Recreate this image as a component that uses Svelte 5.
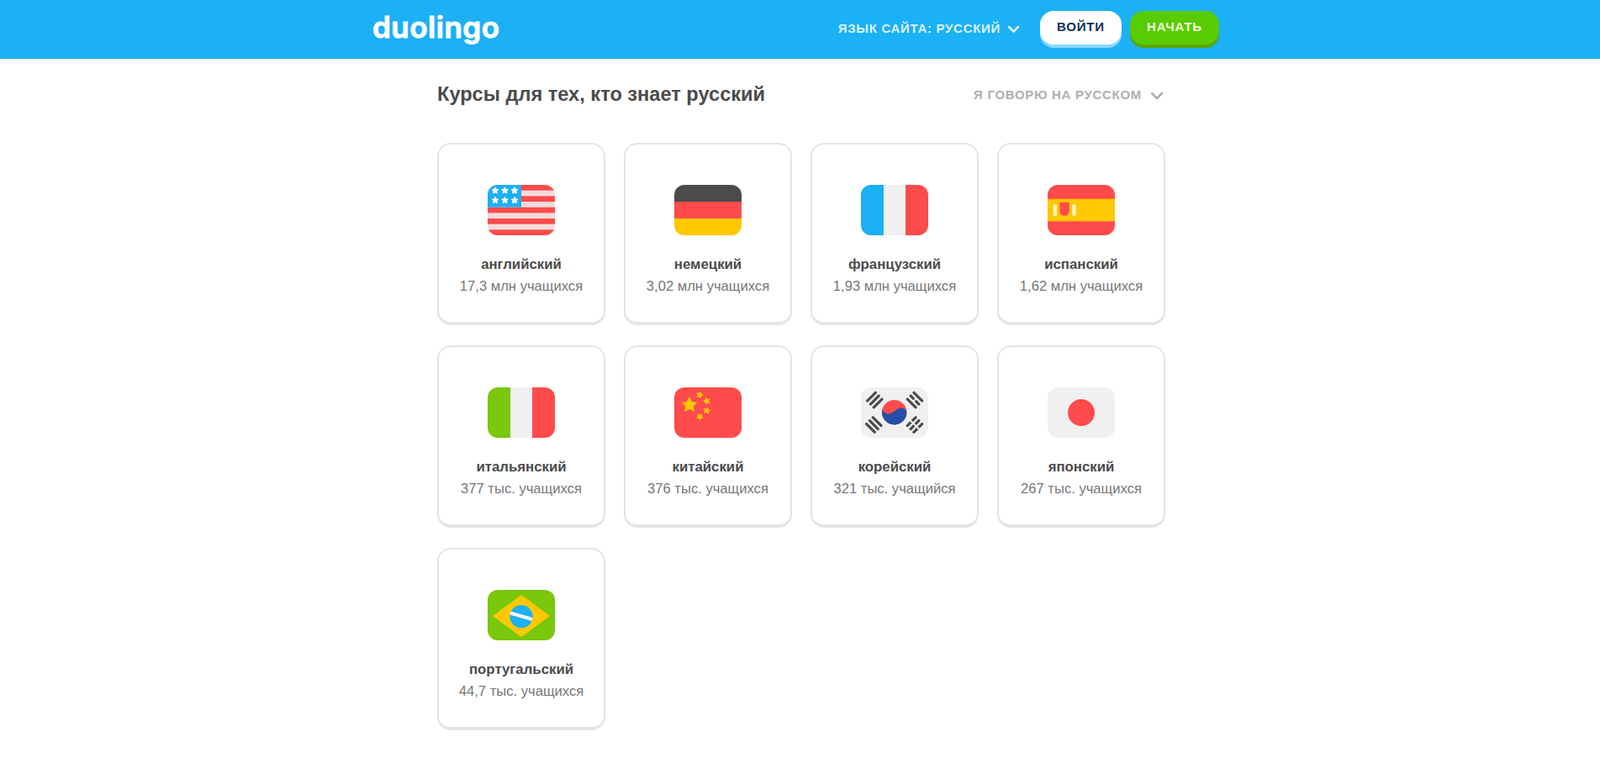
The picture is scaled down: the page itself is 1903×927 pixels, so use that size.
<script lang="ts">
  const courses = [
    { code: 'us', name: 'английский', learners: '17,3 млн учащихся' },
    { code: 'de', name: 'немецкий', learners: '3,02 млн учащихся' },
    { code: 'fr', name: 'французский', learners: '1,93 млн учащихся' },
    { code: 'es', name: 'испанский', learners: '1,62 млн учащихся' },
    { code: 'it', name: 'итальянский', learners: '377 тыс. учащихся' },
    { code: 'cn', name: 'китайский', learners: '376 тыс. учащихся' },
    { code: 'kr', name: 'корейский', learners: '321 тыс. учащийся' },
    { code: 'jp', name: 'японский', learners: '267 тыс. учащихся' },
    { code: 'br', name: 'португальский', learners: '44,7 тыс. учащихся' }
  ];

  const usStars = [
    [9, 6.8], [20.5, 6.8], [32, 6.8],
    [9, 18.4], [20.5, 18.4], [32, 18.4]
  ];
  const cnStars = [
    [30.3, 9, 0.3], [38.7, 16.3, 0.9], [38.7, 27.7, 0.2], [30.3, 35, 0.7]
  ];
  const usStripes = [0, 13.33, 26.67, 40, 53.33];
  const krBars = [-5.4, 0, 5.4];

  // five pointed star, rot in radians
  function star(cx: number, cy: number, r: number, rot = 0) {
    const pts = [];
    for (let i = 0; i < 10; i++) {
      const rad = i % 2 ? r * 0.5 : r;
      const a = -Math.PI / 2 + rot + (i * Math.PI) / 5;
      pts.push(`${(cx + rad * Math.cos(a)).toFixed(2)},${(cy + rad * Math.sin(a)).toFixed(2)}`);
    }
    return pts.join(' ');
  }
</script>

<header class="top-bar">
  <div class="top-inner">
    <span class="logo">duolingo</span>
    <div class="top-actions">
      <button class="site-lang" type="button">
        <span>Язык сайта: русский</span>
        <svg class="chevron" width="15" height="10" viewBox="0 0 15 10" aria-hidden="true">
          <path d="M2 2l5.500 5.500L13 2" />
        </svg>
      </button>
      <button class="btn btn-login" type="button">Войти</button>
      <button class="btn btn-start" type="button">Начать</button>
    </div>
  </div>
</header>

<main class="courses">
  <div class="courses-head">
    <h1 class="title">Курсы для тех, кто знает русский</h1>
    <button class="speak-lang" type="button">
      <span>Я говорю на русском</span>
      <svg class="chevron" width="16" height="10" viewBox="0 0 16 10" aria-hidden="true">
        <path d="M2 2l6 6 6-6" />
      </svg>
    </button>
  </div>

  <ul class="course-grid">
    {#each courses as course (course.code)}
      <li class="course-card">
        <svg class="flag" width="80" height="60" viewBox="0 0 80 60" role="img" aria-label={course.name}>
          <defs>
            <clipPath id="clip-{course.code}">
              <rect width="80" height="60" rx="12" />
            </clipPath>
          </defs>
          <g clip-path="url(#clip-{course.code})">
            {#if course.code === 'us'}
              <rect width="80" height="60" fill="#f3dcdc" />
              {#each usStripes as y (y)}
                <rect {y} width="80" height="6.67" fill="#ff4b4b" />
              {/each}
              <rect width="40" height="26.67" fill="#1cb0f6" />
              {#each usStars as s (s[0] + '-' + s[1])}
                <polygon class="soft" points={star(s[0], s[1], 4)} fill="#fff" stroke="#fff" />
              {/each}
            {:else if course.code === 'de'}
              <rect width="80" height="20" fill="#4b4b4b" />
              <rect y="20" width="80" height="20" fill="#ff4b4b" />
              <rect y="40" width="80" height="20" fill="#ffc800" />
            {:else if course.code === 'fr'}
              <rect width="27" height="60" fill="#1cb0f6" />
              <rect x="27" width="26" height="60" fill="#f0f0f0" />
              <rect x="53" width="27" height="60" fill="#ff4b4b" />
            {:else if course.code === 'es'}
              <rect width="80" height="60" fill="#ff4b4b" />
              <rect y="16.670" width="80" height="26.660" fill="#ffc800" />
              <rect x="6.700" y="23.300" width="4.400" height="13.400" rx="1.500" fill="#fff3c4" />
              <rect x="29.300" y="23.300" width="4.400" height="13.400" rx="1.500" fill="#fff3c4" />
              <path d="M14.300 20.700h11.700v10q0 6-5.850 6t-5.850-6z" fill="#ff4b4b" stroke="#f5a623" stroke-width="0.300" />
            {:else if course.code === 'it'}
              <rect width="27" height="60" fill="#7ac70c" />
              <rect x="27" width="26" height="60" fill="#f0f0f0" />
              <rect x="53" width="27" height="60" fill="#ff4b4b" />
            {:else if course.code === 'cn'}
              <rect width="80" height="60" fill="#ff4b4b" />
              <polygon class="soft" points={star(18, 21, 9)} fill="#ffc800" stroke="#ffc800" />
              {#each cnStars as s (s[0] + '-' + s[1])}
                <polygon class="soft" points={star(s[0], s[1], 3.800, s[2])} fill="#ffc800" stroke="#ffc800" />
              {/each}
            {:else if course.code === 'kr'}
              <rect width="80" height="60" fill="#f0f0f0" />
              <g transform="translate(16.300 15) rotate(-45)">
                {#each krBars as y (y)}
                  <rect x="-8.500" y={y - 1.600} width="17" height="3.200" rx="1.400" fill="#4b4b4b" />
                {/each}
              </g>
              <g transform="translate(15.300 44.500) rotate(45)">
                {#each krBars as y (y)}
                  <rect x="-8.500" y={y - 1.600} width="17" height="3.200" rx="1.400" fill="#4b4b4b" />
                {/each}
              </g>
              <g transform="translate(64 15) rotate(45)">
                {#each krBars as y (y)}
                  <rect x="-8.500" y={y - 1.600} width="17" height="3.200" rx="1.400" fill="#4b4b4b" />
                {/each}
                <rect x="-1" y="-2" width="2" height="4" fill="#f0f0f0" />
              </g>
              <g transform="translate(64 44.500) rotate(-45)">
                {#each krBars as y (y)}
                  <rect x="-8.500" y={y - 1.600} width="17" height="3.200" rx="1.400" fill="#4b4b4b" />
                {/each}
                <rect x="-1" y="-8" width="2" height="16" fill="#f0f0f0" />
              </g>
              <circle cx="39.700" cy="29.700" r="14.700" fill="#ff4b4b" />
              <path d="M25 29.700a14.700 14.700 0 0 0 29.400 0C53.500 24.500 47 23 43 26c-4 3.500-9 7-13 5-2.500-1.200-4-3-4.600-5-.3 1.200-.4 2.400-.4 3.700z" fill="#2250a8" />
            {:else if course.code === 'jp'}
              <rect width="80" height="60" fill="#f0f0f0" />
              <circle cx="40" cy="30" r="16" fill="#ff4b4b" />
            {:else if course.code === 'br'}
              <rect width="80" height="60" fill="#7ac70c" />
              <polygon points="6,31 40,6 74,31 40,56" fill="#ffc800" />
              <circle cx="40" cy="31.700" r="13.600" fill="#1cb0f6" />
              <line x1="27" y1="27.500" x2="53" y2="35" stroke="#f7f7f7" stroke-width="4.400" />
            {/if}
          </g>
        </svg>
        <div class="course-name">{course.name}</div>
        <div class="course-learners">{course.learners}</div>
      </li>
    {/each}
  </ul>
</main>

<style>
  :global(body) {
    background: #fff;
    font-family: 'Liberation Sans', Arial, sans-serif;
    color: #3c3c3c;
  }

  .top-bar {
    height: 70px;
    background: #1cb0f6;
  }

  .top-inner {
    display: flex;
    align-items: center;
    justify-content: space-between;
    height: 100%;
    padding: 0 453px 0 443px;
  }

  .logo {
    font-family: Inter, 'Liberation Sans', sans-serif;
    font-size: 35px;
    font-weight: 600;
    line-height: 1;
    letter-spacing: 0.5px;
    color: #fff;
    margin-top: -6px;
    -webkit-text-stroke: 1px #fff;
    paint-order: stroke fill;
  }

  .top-actions {
    display: flex;
    align-items: center;
  }

  button {
    font-family: inherit;
    cursor: pointer;
    border: none;
    background: none;
    padding: 0;
  }

  .site-lang,
  .speak-lang {
    display: flex;
    align-items: center;
    font-size: 15px;
    font-weight: 700;
    text-transform: uppercase;
    letter-spacing: 0.7px;
  }

  .site-lang {
    color: #dbf3ff;
    gap: 8px;
    margin-right: 24px;
    margin-bottom: 3px;
  }

  .chevron {
    margin-top: 3px;
  }

  .chevron path {
    fill: none;
    stroke: currentColor;
    stroke-width: 2.500;
    stroke-linecap: round;
    stroke-linejoin: round;
  }

  .btn {
    height: 40px;
    padding-bottom: 4px;
    margin-bottom: 4px;
    border-radius: 16px;
    font-size: 15px;
    font-weight: 700;
    text-transform: uppercase;
    letter-spacing: 0.8px;
  }

  .btn-login {
    width: 97px;
    margin-right: 10px;
    background: #fff;
    color: #0e2f5a;
    box-shadow: 0 4px 0 #84d8ff;
  }

  .btn-start {
    width: 106px;
    background: #58cc02;
    color: #f4ffd9;
    box-shadow: 0 4px 0 #58a700;
  }

  .courses {
    width: 866px;
    margin-left: 520px;
  }

  .courses-head {
    display: flex;
    align-items: center;
    justify-content: space-between;
    height: 84px;
    margin-bottom: 16px;
  }

  .title {
    margin: 0;
    font-size: 23.600px;
    font-weight: 700;
    color: #4b4b4b;
  }

  .speak-lang {
    color: #afafaf;
    gap: 10px;
    margin-right: 2px;
  }

  .course-grid {
    list-style: none;
    margin: 0;
    padding: 0;
    display: grid;
    grid-template-columns: repeat(4, 200px);
    column-gap: 22px;
    row-gap: 24px;
  }

  .course-card {
    box-sizing: border-box;
    height: 217px;
    padding-top: 48px;
    border: 2px solid #e5e5e5;
    border-bottom-width: 4px;
    border-radius: 16px;
    text-align: center;
  }

  .flag {
    display: block;
    margin: 0 auto;
  }

  .soft {
    stroke-width: 1;
    stroke-linejoin: round;
  }

  .course-name {
    margin-top: 24px;
    font-size: 16.800px;
    font-weight: 700;
    line-height: 22px;
    color: #4b4b4b;
  }

  .course-learners {
    margin-top: 4px;
    font-size: 16.600px;
    line-height: 22px;
    color: #777;
  }
</style>
